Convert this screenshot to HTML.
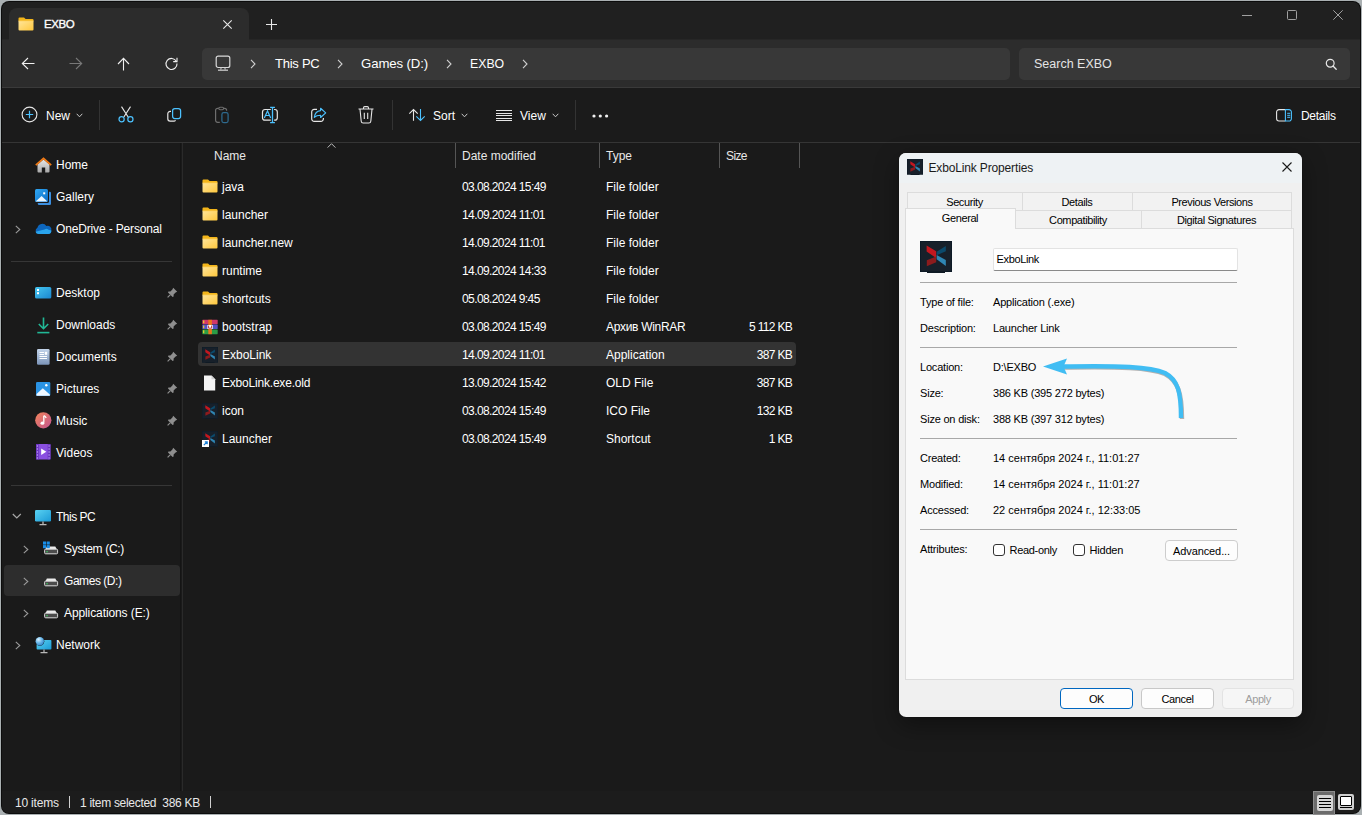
<!DOCTYPE html>
<html><head><meta charset="utf-8">
<style>
*{box-sizing:border-box;margin:0;padding:0}
html,body{width:1362px;height:815px;overflow:hidden;background:#aab0b2}
body{position:relative;font-family:"Liberation Sans",sans-serif;color:#fff}
.a{position:absolute;overflow:visible}
.t{position:absolute;white-space:pre;font-size:12px;line-height:16px;color:#fff}
</style></head><body>
<div class="a" style="left:1px;top:1px;width:1360px;height:813px;background:#0c0c0c;border-radius:8px"></div>
<div class="a" style="left:2px;top:2px;width:1358px;height:811px;background:#202020;border-radius:7px;overflow:hidden"></div>
<div class="a" style="left:9px;top:8px;width:240px;height:32px;background:#2c2c2c;border-radius:8px 8px 0 0"></div>
<div class="a" style="left:2px;top:40px;width:1358px;height:47px;background:#2c2c2c"></div>
<div class="a" style="left:2px;top:39px;width:1358px;height:1px;background:#262626"></div>
<div class="a" style="left:9px;top:39px;width:240px;height:1px;background:#2c2c2c"></div>
<div class="a" style="left:2px;top:87px;width:1358px;height:1px;background:#3a3a3a"></div>
<div class="a" style="left:2px;top:88px;width:1358px;height:54px;background:#1b1b1b"></div>
<div class="a" style="left:2px;top:142px;width:1358px;height:1px;background:#353535"></div>
<div class="a" style="left:2px;top:143px;width:1358px;height:648px;background:#1a1a1a"></div>
<div class="a" style="left:180px;top:143px;width:1px;height:648px;background:#141414"></div>
<div class="a" style="left:182px;top:143px;width:1px;height:648px;background:#2a2a2a"></div>
<div class="a" style="left:2px;top:791px;width:1358px;height:22px;background:#1c1c1c;border-radius:0 0 7px 7px"></div>
<svg class="a" style="left:18px;top:16.5px" width="16" height="14" viewBox="0 0 16 14">
<defs><linearGradient id="fg1" x1="0" y1="0" x2="1" y2="1"><stop offset="0" stop-color="#ffe59a"/><stop offset="1" stop-color="#ffc83d"/></linearGradient></defs>
<path d="M1.5 0.5h4.5l1.6 1.5h6.9a1 1 0 0 1 1 1v1H0.5V1.5a1 1 0 0 1 1-1z" fill="#f3b51a"/>
<path d="M0.5 4h15v8.5a1 1 0 0 1-1 1h-13a1 1 0 0 1-1-1z" fill="url(#fg1)"/>
<path d="M0.5 3.6h15v0.8h-15z" fill="#fbd262"/>
</svg>
<div class="t" style="left:44px;top:16.0px;font-size:11.5px;line-height:16px;color:#fff;letter-spacing:-0.4px;-webkit-text-stroke:0.35px #fff">EXBO</div>
<svg class="a" style="left:223px;top:19.5px" width="9" height="9" viewBox="0 0 9 9"><path d="M0.3 0.3L8.7 8.7M8.7 0.3L0.3 8.7" stroke="#e8e8e8" stroke-width="1.1"/></svg>
<svg class="a" style="left:266px;top:19px" width="11" height="11" viewBox="0 0 11 11"><path d="M5.5 0V11M0 5.5H11" stroke="#e8e8e8" stroke-width="1.1"/></svg>
<svg class="a" style="left:1242px;top:15px" width="10" height="1" viewBox="0 0 10 1"><path d="M0 0.5H10" stroke="#a0a0a0" stroke-width="1"/></svg>
<svg class="a" style="left:1287px;top:10px" width="10" height="10" viewBox="0 0 10 10"><rect x="0.5" y="0.5" width="9" height="9" rx="1" fill="none" stroke="#a0a0a0" stroke-width="1"/></svg>
<svg class="a" style="left:1333px;top:10px" width="10" height="10" viewBox="0 0 10 10"><path d="M0.3 0.3L9.7 9.7M9.7 0.3L0.3 9.7" stroke="#a0a0a0" stroke-width="1"/></svg>
<svg class="a" style="left:21px;top:57px" width="14" height="13" viewBox="0 0 14 13"><path d="M13.5 6.5H1.5M7 1L1.3 6.5L7 12" fill="none" stroke="#f0f0f0" stroke-width="1.1"/></svg>
<svg class="a" style="left:69px;top:57px" width="14" height="13" viewBox="0 0 14 13"><path d="M0.5 6.5H12.5M7 1L12.7 6.5L7 12" fill="none" stroke="#787878" stroke-width="1.1"/></svg>
<svg class="a" style="left:117px;top:57px" width="13" height="14" viewBox="0 0 13 14"><path d="M6.5 13.5V1.5M1 7L6.5 1.3L12 7" fill="none" stroke="#f0f0f0" stroke-width="1.1"/></svg>
<svg class="a" style="left:165px;top:57px" width="13" height="13" viewBox="0 0 13 13"><path d="M11.3 4.2A5.5 5.5 0 1 0 12 6.5" fill="none" stroke="#f0f0f0" stroke-width="1.1"/><path d="M12 0.8V4.6H8.2" fill="none" stroke="#f0f0f0" stroke-width="1.1"/></svg>
<div class="a" style="left:202px;top:48px;width:808px;height:32px;background:#383838;border-radius:5px"></div>
<svg class="a" style="left:215px;top:55px" width="16" height="17" viewBox="0 0 16 17"><rect x="1.2" y="1.2" width="13.6" height="11.3" rx="2" fill="none" stroke="#d8d8d8" stroke-width="1.2"/><path d="M6.2 12.6L5.7 14.6M9.8 12.6L10.3 14.6" stroke="#c8c8c8" stroke-width="1.1"/><path d="M3 15.2H13" stroke="#c8c8c8" stroke-width="1.3"/></svg>
<svg class="a" style="left:250px;top:59px" width="6" height="10" viewBox="0 0 6 10"><path d="M1 0.8L5 5L1 9.2" fill="none" stroke="#d0d0d0" stroke-width="1.1"/></svg>
<div class="t" style="left:275px;top:56.3px;font-size:13px;line-height:16px;color:#fff;letter-spacing:-0.25px">This PC</div>
<svg class="a" style="left:337px;top:59px" width="6" height="10" viewBox="0 0 6 10"><path d="M1 0.8L5 5L1 9.2" fill="none" stroke="#d0d0d0" stroke-width="1.1"/></svg>
<div class="t" style="left:361px;top:56.3px;font-size:13.2px;line-height:16px;color:#fff;letter-spacing:-0.1px">Games (D:)</div>
<svg class="a" style="left:446px;top:59px" width="6" height="10" viewBox="0 0 6 10"><path d="M1 0.8L5 5L1 9.2" fill="none" stroke="#d0d0d0" stroke-width="1.1"/></svg>
<div class="t" style="left:470px;top:56.3px;font-size:12.3px;line-height:16px;color:#fff;">EXBO</div>
<svg class="a" style="left:522px;top:59px" width="6" height="10" viewBox="0 0 6 10"><path d="M1 0.8L5 5L1 9.2" fill="none" stroke="#d0d0d0" stroke-width="1.1"/></svg>
<div class="a" style="left:1019px;top:48px;width:331px;height:32px;background:#383838;border-radius:5px"></div>
<div class="t" style="left:1034px;top:56.0px;font-size:12.5px;line-height:16px;color:#e4e4e4;">Search EXBO</div>
<svg class="a" style="left:1324px;top:57px" width="13" height="13" viewBox="0 0 13 13"><circle cx="6.2" cy="6.2" r="3.9" fill="none" stroke="#e8e8e8" stroke-width="1.2"/><path d="M9 9L12.2 12.2" stroke="#e8e8e8" stroke-width="1.3" stroke-linecap="round"/></svg>
<svg class="a" style="left:21px;top:106px" width="17" height="17" viewBox="0 0 17 17"><circle cx="8.5" cy="8.5" r="7.4" fill="none" stroke="#e6e6e6" stroke-width="1.1"/><path d="M8.5 4.8V12.2M4.8 8.5H12.2" stroke="#4cc2ff" stroke-width="1.2"/></svg>
<div class="t" style="left:46px;top:107.5px;font-size:12px;line-height:16px;color:#fff;">New</div>
<svg class="a" style="left:75.5px;top:113.0px" width="7" height="5" viewBox="0 0 7 5"><path d="M0.7 0.8L3.5 3.8L6.3 0.8" fill="none" stroke="#c8c8c8" stroke-width="1"/></svg>
<div class="a" style="left:99px;top:100px;width:1px;height:30px;background:#333"></div>
<svg class="a" style="left:118px;top:106px" width="16" height="17" viewBox="0 0 16 17"><path d="M3.5 0.6L10.3 11.2M12.5 0.6L5.7 11.2" stroke="#e6e6e6" stroke-width="1.1" fill="none"/><circle cx="3.6" cy="13.3" r="2.6" fill="none" stroke="#4cc2ff" stroke-width="1.2"/><circle cx="12.4" cy="13.3" r="2.6" fill="none" stroke="#4cc2ff" stroke-width="1.2"/></svg>
<svg class="a" style="left:166px;top:107px" width="16" height="16" viewBox="0 0 16 16"><rect x="6.6" y="1.6" width="8" height="9.9" rx="2.2" fill="none" stroke="#4cc2ff" stroke-width="1.25"/><path d="M5 4.4H4.1A2.3 2.3 0 0 0 1.8 6.7V11.8A2.3 2.3 0 0 0 4.1 14.1H7.9A1.8 1.8 0 0 0 9.5 13.2" fill="none" stroke="#e6e6e6" stroke-width="1.2"/></svg>
<svg class="a" style="left:214px;top:106px" width="16" height="18" viewBox="0 0 16 18"><path d="M5.8 16.3H3.6A2 2 0 0 1 1.6 14.3V4.3A2 2 0 0 1 3.6 2.3H4.7M9.7 2.3H10.6A2 2 0 0 1 12.6 4.3V4.7" fill="none" stroke="#6e6e6e" stroke-width="1.2"/><rect x="4.8" y="1.2" width="4.8" height="2.5" rx="1.25" fill="none" stroke="#6e6e6e" stroke-width="1.1"/><rect x="7.9" y="6.6" width="6.2" height="10" rx="1.8" fill="none" stroke="#2e6a8e" stroke-width="1.25"/></svg>
<svg class="a" style="left:261px;top:106px" width="18" height="18" viewBox="0 0 18 18"><path d="M9.8 3.5H4A2.5 2.5 0 0 0 1.5 6V11.7A2.5 2.5 0 0 0 4 14.2H9.8M13.1 3.5H13.8A2.5 2.5 0 0 1 16.3 6V11.7A2.5 2.5 0 0 1 13.8 14.2H13.1" fill="none" stroke="#e6e6e6" stroke-width="1.2"/><path d="M11.5 1.3V16.7M9.1 1.3H13.9M9.1 16.7H13.9" stroke="#4cc2ff" stroke-width="1.3" fill="none"/><path d="M3.3 11.9L6.5 4.9L9.7 11.9M4.5 9.5H8.5" stroke="#4cc2ff" stroke-width="1.2" fill="none"/></svg>
<svg class="a" style="left:310px;top:107px" width="17" height="16" viewBox="0 0 17 16"><path d="M7 2.4H4.2A2.5 2.5 0 0 0 1.7 4.9V11.8A2.5 2.5 0 0 0 4.2 14.3H10.9A2.5 2.5 0 0 0 13.4 11.8V10.9" fill="none" stroke="#e6e6e6" stroke-width="1.2"/><path d="M10.6 1.3L15.7 5.9L10.6 10.5V8.2C7.6 8.2 5.6 9 4.3 10.3C4.8 6.5 7.2 3.9 10.6 3.6Z" fill="none" stroke="#4cc2ff" stroke-width="1.15" stroke-linejoin="round"/></svg>
<svg class="a" style="left:358px;top:106px" width="16" height="18" viewBox="0 0 16 18"><path d="M0.5 3H15.5M5.5 3V1.8A1.2 1.2 0 0 1 6.7 0.6H9.3A1.2 1.2 0 0 1 10.5 1.8V3M2 3.3L3.2 15.2A2 2 0 0 0 5.2 17H10.8A2 2 0 0 0 12.8 15.2L14 3.3M6.3 6.8V13M9.7 6.8V13" fill="none" stroke="#e6e6e6" stroke-width="1.1"/></svg>
<div class="a" style="left:392px;top:100px;width:1px;height:30px;background:#333"></div>
<svg class="a" style="left:408px;top:109px" width="18" height="13" viewBox="0 0 18 13"><path d="M5.5 11.7V0.8M1.3 4.6L5.5 0.6L9.7 4.6" fill="none" stroke="#e6e6e6" stroke-width="1.1"/><path d="M12.5 0.1V11M8.3 7.4L12.5 11.4L16.7 7.4" fill="none" stroke="#4cc2ff" stroke-width="1.1"/></svg>
<div class="t" style="left:433px;top:107.5px;font-size:12px;line-height:16px;color:#fff;">Sort</div>
<svg class="a" style="left:461px;top:113.0px" width="7" height="5" viewBox="0 0 7 5"><path d="M0.7 0.8L3.5 3.8L6.3 0.8" fill="none" stroke="#c8c8c8" stroke-width="1"/></svg>
<svg class="a" style="left:496px;top:110px" width="16" height="11" viewBox="0 0 16 11"><path d="M0 0.5H16M0 3.5H16M0 5.5H16M0 8.5H16M0 10.5H16" stroke="#e6e6e6" stroke-width="1" shape-rendering="crispEdges"/></svg>
<div class="t" style="left:520px;top:107.5px;font-size:12px;line-height:16px;color:#fff;">View</div>
<svg class="a" style="left:551.5px;top:113.0px" width="7" height="5" viewBox="0 0 7 5"><path d="M0.7 0.8L3.5 3.8L6.3 0.8" fill="none" stroke="#c8c8c8" stroke-width="1"/></svg>
<div class="a" style="left:575px;top:100px;width:1px;height:30px;background:#333"></div>
<svg class="a" style="left:592px;top:114px" width="17" height="4" viewBox="0 0 17 4"><circle cx="2" cy="2" r="1.6" fill="#f0f0f0"/><circle cx="8.3" cy="2" r="1.6" fill="#f0f0f0"/><circle cx="14.6" cy="2" r="1.6" fill="#f0f0f0"/></svg>
<svg class="a" style="left:1276px;top:109px" width="16" height="13" viewBox="0 0 16 13"><path d="M9.4 0.6H3A2.4 2.4 0 0 0 0.6 3V9.6A2.4 2.4 0 0 0 3 12H9.4" fill="none" stroke="#e6e6e6" stroke-width="1.1"/><path d="M9.4 0.6H13A2.4 2.4 0 0 1 15.4 3V9.6A2.4 2.4 0 0 1 13 12H9.4Z" fill="none" stroke="#4cc2ff" stroke-width="1.1"/><path d="M11.2 4.3H14.2M11.2 6.3H14.2M11.2 8.3H14.2" stroke="#4cc2ff" stroke-width="1"/></svg>
<div class="t" style="left:1301px;top:107.5px;font-size:12px;line-height:16px;color:#fff;letter-spacing:-0.3px">Details</div>
<svg class="a" style="left:35px;top:157px" width="17" height="16" viewBox="0 0 17 16"><defs><linearGradient id="hg" x1="0" y1="0" x2="0" y2="1"><stop offset="0" stop-color="#e8e8e8"/><stop offset="1" stop-color="#a8a8a8"/></linearGradient></defs><path d="M2.5 7.5L8.5 2.5L14.5 7.5V14.5A1 1 0 0 1 13.5 15.5H10.2V10.5H6.8V15.5H3.5A1 1 0 0 1 2.5 14.5Z" fill="url(#hg)"/><path d="M0.8 8.2L8.5 1.3L16.2 8.2" fill="none" stroke="#f07a16" stroke-width="1.8" stroke-linejoin="round"/></svg>
<div class="t" style="left:56px;top:156.5px;font-size:12px;line-height:16px;color:#fff;">Home</div>
<svg class="a" style="left:35px;top:189px" width="17" height="17" viewBox="0 0 17 17"><defs><linearGradient id="gg" x1="0" y1="0" x2="1" y2="1"><stop offset="0" stop-color="#30a8f4"/><stop offset="1" stop-color="#0b6cc6"/></linearGradient></defs><rect x="2.8" y="2.8" width="13.2" height="13.2" rx="1.3" fill="#3b8fe0"/><rect x="0" y="0" width="14" height="14" rx="1.6" fill="#1a1a1a"/><rect x="0" y="0" width="13" height="13" rx="1.5" fill="url(#gg)"/><path d="M0.6 12.4L6.6 7L12.4 12.4Z" fill="#eaf6ff"/><rect x="8.2" y="3.3" width="2" height="2" fill="#fff"/></svg>
<div class="t" style="left:56px;top:188.5px;font-size:12px;line-height:16px;color:#fff;">Gallery</div>
<svg class="a" style="left:15px;top:225.0px" width="6" height="9" viewBox="0 0 6 9"><path d="M0.8 0.8L4.8 4.5L0.8 8.2" fill="none" stroke="#9a9a9a" stroke-width="1.1"/></svg>
<svg class="a" style="left:35px;top:223px" width="17" height="12" viewBox="0 0 17 12"><path d="M3.6 11A3.3 3.3 0 0 1 2.4 4.8A5 5 0 0 1 11.4 3A3.8 3.8 0 0 1 16.3 7.6A3.2 3.2 0 0 1 13.2 11Z" fill="#0d66bd"/><path d="M3.6 11H13.2A3.2 3.2 0 0 0 16.3 7.6L13.5 6.8A3 3 0 0 0 9.5 6.5L0.5 8.8A3.2 3.2 0 0 0 3.6 11Z" fill="#2aa4ec"/></svg>
<div class="t" style="left:56px;top:220.5px;font-size:12px;line-height:16px;color:#fff;letter-spacing:-0.15px">OneDrive - Personal</div>
<div class="a" style="left:11px;top:261px;width:161px;height:1px;background:#363636"></div>
<svg class="a" style="left:35px;top:287px" width="17" height="12" viewBox="0 0 17 12"><defs><linearGradient id="dg" x1="0" y1="0" x2="1" y2="1"><stop offset="0" stop-color="#45c6f0"/><stop offset="1" stop-color="#1a86d0"/></linearGradient></defs><rect x="0" y="0" width="16.3" height="11.6" rx="1.6" fill="url(#dg)"/><rect x="2" y="2" width="2" height="2" fill="#fff"/><rect x="2" y="5.2" width="2" height="2" fill="#fff"/></svg>
<div class="t" style="left:56px;top:284.5px;font-size:12px;line-height:16px;color:#fff;">Desktop</div>
<svg class="a" style="left:167px;top:287.0px" width="11" height="11" viewBox="0 0 11 11"><path d="M6.2 0.8L10.2 4.8L8.6 5.6L6.6 7.6L6.6 9.6L5.6 10L1 5.4L1.4 4.4L3.4 4.4L5.4 2.4Z" fill="#8f8f8f"/><path d="M3.2 7.8L0.6 10.4" stroke="#8f8f8f" stroke-width="1.2"/></svg>
<svg class="a" style="left:37px;top:317px" width="13" height="17" viewBox="0 0 13 17"><path d="M6.5 0.5V11.5M1.8 7L6.5 11.7L11.2 7" fill="none" stroke="#21b896" stroke-width="1.6"/><path d="M0.3 15.6H12.4" stroke="#21b896" stroke-width="1.6"/></svg>
<div class="t" style="left:56px;top:316.5px;font-size:12px;line-height:16px;color:#fff;">Downloads</div>
<svg class="a" style="left:167px;top:319.0px" width="11" height="11" viewBox="0 0 11 11"><path d="M6.2 0.8L10.2 4.8L8.6 5.6L6.6 7.6L6.6 9.6L5.6 10L1 5.4L1.4 4.4L3.4 4.4L5.4 2.4Z" fill="#8f8f8f"/><path d="M3.2 7.8L0.6 10.4" stroke="#8f8f8f" stroke-width="1.2"/></svg>
<svg class="a" style="left:37px;top:349px" width="13" height="16" viewBox="0 0 13 16"><defs><linearGradient id="docg" x1="0" y1="0" x2="0" y2="1"><stop offset="0" stop-color="#c3d4ea"/><stop offset="1" stop-color="#7b94b8"/></linearGradient></defs><rect x="0" y="0" width="12.6" height="15.8" rx="1.3" fill="url(#docg)"/><path d="M2.5 3.5H7M2.5 5.5H7M2.5 7.5H10M2.5 9.5H10" stroke="#fff" stroke-width="1"/><rect x="7.8" y="2.8" width="2.4" height="3" fill="#fff"/></svg>
<div class="t" style="left:56px;top:348.5px;font-size:12px;line-height:16px;color:#fff;">Documents</div>
<svg class="a" style="left:167px;top:351.0px" width="11" height="11" viewBox="0 0 11 11"><path d="M6.2 0.8L10.2 4.8L8.6 5.6L6.6 7.6L6.6 9.6L5.6 10L1 5.4L1.4 4.4L3.4 4.4L5.4 2.4Z" fill="#8f8f8f"/><path d="M3.2 7.8L0.6 10.4" stroke="#8f8f8f" stroke-width="1.2"/></svg>
<svg class="a" style="left:36px;top:382px" width="15" height="15" viewBox="0 0 15 15"><rect x="0" y="0" width="14.3" height="14" rx="1.3" fill="#2a93e4"/><path d="M0.5 12L6.8 6.3L13.8 12.5V13.7H0.5Z" fill="#eef6ff"/><circle cx="10.3" cy="3.3" r="1.2" fill="#fff"/></svg>
<div class="t" style="left:56px;top:380.5px;font-size:12px;line-height:16px;color:#fff;">Pictures</div>
<svg class="a" style="left:167px;top:383.0px" width="11" height="11" viewBox="0 0 11 11"><path d="M6.2 0.8L10.2 4.8L8.6 5.6L6.6 7.6L6.6 9.6L5.6 10L1 5.4L1.4 4.4L3.4 4.4L5.4 2.4Z" fill="#8f8f8f"/><path d="M3.2 7.8L0.6 10.4" stroke="#8f8f8f" stroke-width="1.2"/></svg>
<svg class="a" style="left:35px;top:412px" width="17" height="17" viewBox="0 0 17 17"><defs><linearGradient id="mg" x1="0" y1="0" x2="1" y2="1"><stop offset="0" stop-color="#f2845a"/><stop offset="1" stop-color="#c2558f"/></linearGradient></defs><circle cx="8.3" cy="8.3" r="8.1" fill="url(#mg)"/><path d="M8.8 3.8V10.8" stroke="#fff" stroke-width="1.3"/><path d="M8.8 3.6Q10.5 4.2 11.2 6" stroke="#fff" stroke-width="1.2" fill="none"/><ellipse cx="7.4" cy="11.2" rx="1.9" ry="1.6" fill="#fff"/></svg>
<div class="t" style="left:56px;top:412.5px;font-size:12px;line-height:16px;color:#fff;">Music</div>
<svg class="a" style="left:167px;top:415.0px" width="11" height="11" viewBox="0 0 11 11"><path d="M6.2 0.8L10.2 4.8L8.6 5.6L6.6 7.6L6.6 9.6L5.6 10L1 5.4L1.4 4.4L3.4 4.4L5.4 2.4Z" fill="#8f8f8f"/><path d="M3.2 7.8L0.6 10.4" stroke="#8f8f8f" stroke-width="1.2"/></svg>
<svg class="a" style="left:36px;top:444px" width="15" height="16" viewBox="0 0 15 16"><rect x="0" y="0" width="14.5" height="15.5" rx="1.3" fill="#8a4fe0"/><path d="M0 0H2.8V15.5H0ZM11.7 0H14.5V15.5H11.7Z" fill="#6a34c0"/><path d="M0.8 2H2M0.8 5H2M0.8 8H2M0.8 11H2M0.8 14H2M12.5 2H13.7M12.5 5H13.7M12.5 8H13.7M12.5 11H13.7M12.5 14H13.7" stroke="#d8c0ff" stroke-width="1.1"/><path d="M5.2 4.5L10.3 7.8L5.2 11Z" fill="#fff"/></svg>
<div class="t" style="left:56px;top:444.5px;font-size:12px;line-height:16px;color:#fff;">Videos</div>
<svg class="a" style="left:167px;top:447.0px" width="11" height="11" viewBox="0 0 11 11"><path d="M6.2 0.8L10.2 4.8L8.6 5.6L6.6 7.6L6.6 9.6L5.6 10L1 5.4L1.4 4.4L3.4 4.4L5.4 2.4Z" fill="#8f8f8f"/><path d="M3.2 7.8L0.6 10.4" stroke="#8f8f8f" stroke-width="1.2"/></svg>
<div class="a" style="left:11px;top:485px;width:161px;height:1px;background:#363636"></div>
<svg class="a" style="left:12px;top:513px" width="10" height="7" viewBox="0 0 10 7"><path d="M0.8 1L4.8 5L8.8 1" fill="none" stroke="#a8a8a8" stroke-width="1.2"/></svg>
<svg class="a" style="left:35px;top:510px" width="16" height="16" viewBox="0 0 16 16"><defs><linearGradient id="pcg" x1="0" y1="0" x2="1" y2="1"><stop offset="0" stop-color="#5ad2f2"/><stop offset="1" stop-color="#1b9ad6"/></linearGradient></defs><rect x="0" y="0" width="16" height="11.5" rx="1.2" fill="url(#pcg)"/><path d="M8 11.5V14M4.5 14.6H11.5" stroke="#b8b8b8" stroke-width="1.3"/></svg>
<div class="t" style="left:56px;top:508.5px;font-size:12px;line-height:16px;color:#fff;letter-spacing:-0.5px">This PC</div>
<svg class="a" style="left:23px;top:545.0px" width="6" height="9" viewBox="0 0 6 9"><path d="M0.8 0.8L4.8 4.5L0.8 8.2" fill="none" stroke="#9a9a9a" stroke-width="1.1"/></svg>
<svg class="a" style="left:43px;top:540.5px" width="16" height="16" viewBox="0 0 16 16"><path d="M2.3 8.4L3.9 5.6H12.3L13.9 8.4Z" fill="#ececec"/><rect x="1.6" y="8.2" width="13" height="4.6" rx="1" fill="#4c4c4c" stroke="#dcdcdc" stroke-width="1"/><rect x="3.4" y="10" width="1.3" height="1.3" fill="#3ad060"/><rect x="0" y="0.5" width="3.1" height="3.1" fill="#1a8ee8"/><rect x="3.7" y="0.5" width="3.1" height="3.1" fill="#1a8ee8"/><rect x="0" y="4.1" width="3.1" height="3.1" fill="#1a8ee8"/><rect x="3.7" y="4.1" width="3.1" height="3.1" fill="#1a8ee8"/></svg>
<div class="t" style="left:64px;top:540.5px;font-size:12px;line-height:16px;color:#fff;letter-spacing:-0.3px">System (C:)</div>
<div class="a" style="left:4px;top:565px;width:176px;height:31px;background:#2d2d2d;border-radius:4px"></div>
<svg class="a" style="left:23px;top:577.0px" width="6" height="9" viewBox="0 0 6 9"><path d="M0.8 0.8L4.8 4.5L0.8 8.2" fill="none" stroke="#9a9a9a" stroke-width="1.1"/></svg>
<svg class="a" style="left:43px;top:572.5px" width="16" height="16" viewBox="0 0 16 16"><path d="M2.3 8.4L3.9 5.6H12.3L13.9 8.4Z" fill="#ececec"/><rect x="1.6" y="8.2" width="13" height="4.6" rx="1" fill="#4c4c4c" stroke="#dcdcdc" stroke-width="1"/><rect x="3.4" y="10" width="1.3" height="1.3" fill="#3ad060"/></svg>
<div class="t" style="left:64px;top:572.5px;font-size:12px;line-height:16px;color:#fff;letter-spacing:-0.45px">Games (D:)</div>
<svg class="a" style="left:23px;top:609.0px" width="6" height="9" viewBox="0 0 6 9"><path d="M0.8 0.8L4.8 4.5L0.8 8.2" fill="none" stroke="#9a9a9a" stroke-width="1.1"/></svg>
<svg class="a" style="left:43px;top:604.5px" width="16" height="16" viewBox="0 0 16 16"><path d="M2.3 8.4L3.9 5.6H12.3L13.9 8.4Z" fill="#ececec"/><rect x="1.6" y="8.2" width="13" height="4.6" rx="1" fill="#4c4c4c" stroke="#dcdcdc" stroke-width="1"/><rect x="3.4" y="10" width="1.3" height="1.3" fill="#3ad060"/></svg>
<div class="t" style="left:64px;top:604.5px;font-size:12px;line-height:16px;color:#fff;letter-spacing:-0.1px">Applications (E:)</div>
<svg class="a" style="left:15px;top:641.0px" width="6" height="9" viewBox="0 0 6 9"><path d="M0.8 0.8L4.8 4.5L0.8 8.2" fill="none" stroke="#9a9a9a" stroke-width="1.1"/></svg>
<svg class="a" style="left:35px;top:636px" width="17" height="18" viewBox="0 0 17 18"><defs><linearGradient id="ng" x1="0" y1="0" x2="1" y2="1"><stop offset="0" stop-color="#5ad2f2"/><stop offset="1" stop-color="#1b9ad6"/></linearGradient><radialGradient id="glb" cx="0.35" cy="0.3" r="0.8"><stop offset="0" stop-color="#d8f0ff"/><stop offset="0.5" stop-color="#6ab8ea"/><stop offset="1" stop-color="#2a7cc8"/></radialGradient></defs><rect x="1.6" y="4" width="14.8" height="9.6" rx="0.8" fill="url(#ng)"/><path d="M9 13.6V16M5.5 16.6H12.5" stroke="#b8b8b8" stroke-width="1.2"/><circle cx="4.8" cy="5.2" r="4.5" fill="#1a1a1a"/><circle cx="4.8" cy="5.2" r="4.2" fill="url(#glb)"/></svg>
<div class="t" style="left:56px;top:636.5px;font-size:12px;line-height:16px;color:#fff;">Network</div>
<div class="t" style="left:214px;top:147.5px;font-size:12px;line-height:16px;color:#e8e8e8;">Name</div>
<svg class="a" style="left:327px;top:143px" width="9" height="5" viewBox="0 0 9 5"><path d="M0.6 4.6L4.5 0.7L8.4 4.6" fill="none" stroke="#bdbdbd" stroke-width="1"/></svg>
<div class="a" style="left:455px;top:143px;width:1px;height:25px;background:#555555"></div>
<div class="a" style="left:599px;top:143px;width:1px;height:25px;background:#555555"></div>
<div class="a" style="left:719px;top:143px;width:1px;height:25px;background:#555555"></div>
<div class="a" style="left:799px;top:143px;width:1px;height:25px;background:#555555"></div>
<div class="t" style="left:462px;top:147.5px;font-size:12px;line-height:16px;color:#e8e8e8;">Date modified</div>
<div class="t" style="left:606px;top:147.5px;font-size:12px;line-height:16px;color:#e8e8e8;">Type</div>
<div class="t" style="left:726px;top:147.5px;font-size:12px;line-height:16px;color:#e8e8e8;letter-spacing:-0.6px">Size</div>
<div class="a" style="left:198px;top:342px;width:598px;height:24px;background:#333333;border-radius:4px"></div>
<svg class="a" style="left:202px;top:179.0px" width="16" height="14" viewBox="0 0 16 14">
<defs><linearGradient id="fg2" x1="0" y1="0" x2="1" y2="1"><stop offset="0" stop-color="#ffe59a"/><stop offset="1" stop-color="#ffc83d"/></linearGradient></defs>
<path d="M1.5 0.5h4.5l1.6 1.5h6.9a1 1 0 0 1 1 1v1H0.5V1.5a1 1 0 0 1 1-1z" fill="#f3b51a"/>
<path d="M0.5 4h15v8.5a1 1 0 0 1-1 1h-13a1 1 0 0 1-1-1z" fill="url(#fg2)"/>
<path d="M0.5 3.6h15v0.8h-15z" fill="#fbd262"/>
</svg>
<div class="t" style="left:222px;top:178.5px;font-size:12px;line-height:16px;color:#fff;">java</div>
<div class="t" style="left:462px;top:178.5px;font-size:12px;line-height:16px;color:#fff;letter-spacing:-0.6px">03.08.2024 15:49</div>
<div class="t" style="left:606px;top:178.5px;font-size:12px;line-height:16px;color:#fff;">File folder</div>
<svg class="a" style="left:202px;top:207.0px" width="16" height="14" viewBox="0 0 16 14">
<defs><linearGradient id="fg3" x1="0" y1="0" x2="1" y2="1"><stop offset="0" stop-color="#ffe59a"/><stop offset="1" stop-color="#ffc83d"/></linearGradient></defs>
<path d="M1.5 0.5h4.5l1.6 1.5h6.9a1 1 0 0 1 1 1v1H0.5V1.5a1 1 0 0 1 1-1z" fill="#f3b51a"/>
<path d="M0.5 4h15v8.5a1 1 0 0 1-1 1h-13a1 1 0 0 1-1-1z" fill="url(#fg3)"/>
<path d="M0.5 3.6h15v0.8h-15z" fill="#fbd262"/>
</svg>
<div class="t" style="left:222px;top:206.5px;font-size:12px;line-height:16px;color:#fff;">launcher</div>
<div class="t" style="left:462px;top:206.5px;font-size:12px;line-height:16px;color:#fff;letter-spacing:-0.6px">14.09.2024 11:01</div>
<div class="t" style="left:606px;top:206.5px;font-size:12px;line-height:16px;color:#fff;">File folder</div>
<svg class="a" style="left:202px;top:235.0px" width="16" height="14" viewBox="0 0 16 14">
<defs><linearGradient id="fg4" x1="0" y1="0" x2="1" y2="1"><stop offset="0" stop-color="#ffe59a"/><stop offset="1" stop-color="#ffc83d"/></linearGradient></defs>
<path d="M1.5 0.5h4.5l1.6 1.5h6.9a1 1 0 0 1 1 1v1H0.5V1.5a1 1 0 0 1 1-1z" fill="#f3b51a"/>
<path d="M0.5 4h15v8.5a1 1 0 0 1-1 1h-13a1 1 0 0 1-1-1z" fill="url(#fg4)"/>
<path d="M0.5 3.6h15v0.8h-15z" fill="#fbd262"/>
</svg>
<div class="t" style="left:222px;top:234.5px;font-size:12px;line-height:16px;color:#fff;">launcher.new</div>
<div class="t" style="left:462px;top:234.5px;font-size:12px;line-height:16px;color:#fff;letter-spacing:-0.6px">14.09.2024 11:01</div>
<div class="t" style="left:606px;top:234.5px;font-size:12px;line-height:16px;color:#fff;">File folder</div>
<svg class="a" style="left:202px;top:263.0px" width="16" height="14" viewBox="0 0 16 14">
<defs><linearGradient id="fg5" x1="0" y1="0" x2="1" y2="1"><stop offset="0" stop-color="#ffe59a"/><stop offset="1" stop-color="#ffc83d"/></linearGradient></defs>
<path d="M1.5 0.5h4.5l1.6 1.5h6.9a1 1 0 0 1 1 1v1H0.5V1.5a1 1 0 0 1 1-1z" fill="#f3b51a"/>
<path d="M0.5 4h15v8.5a1 1 0 0 1-1 1h-13a1 1 0 0 1-1-1z" fill="url(#fg5)"/>
<path d="M0.5 3.6h15v0.8h-15z" fill="#fbd262"/>
</svg>
<div class="t" style="left:222px;top:262.5px;font-size:12px;line-height:16px;color:#fff;">runtime</div>
<div class="t" style="left:462px;top:262.5px;font-size:12px;line-height:16px;color:#fff;letter-spacing:-0.6px">14.09.2024 14:33</div>
<div class="t" style="left:606px;top:262.5px;font-size:12px;line-height:16px;color:#fff;">File folder</div>
<svg class="a" style="left:202px;top:291.0px" width="16" height="14" viewBox="0 0 16 14">
<defs><linearGradient id="fg6" x1="0" y1="0" x2="1" y2="1"><stop offset="0" stop-color="#ffe59a"/><stop offset="1" stop-color="#ffc83d"/></linearGradient></defs>
<path d="M1.5 0.5h4.5l1.6 1.5h6.9a1 1 0 0 1 1 1v1H0.5V1.5a1 1 0 0 1 1-1z" fill="#f3b51a"/>
<path d="M0.5 4h15v8.5a1 1 0 0 1-1 1h-13a1 1 0 0 1-1-1z" fill="url(#fg6)"/>
<path d="M0.5 3.6h15v0.8h-15z" fill="#fbd262"/>
</svg>
<div class="t" style="left:222px;top:290.5px;font-size:12px;line-height:16px;color:#fff;">shortcuts</div>
<div class="t" style="left:462px;top:290.5px;font-size:12px;line-height:16px;color:#fff;letter-spacing:-0.6px">05.08.2024 9:45</div>
<div class="t" style="left:606px;top:290.5px;font-size:12px;line-height:16px;color:#fff;">File folder</div>
<svg class="a" style="left:202px;top:318.5px" width="16" height="16" viewBox="0 0 16 16"><rect x="0.3" y="0.8" width="15.4" height="4.4" rx="0.6" fill="#d0386a"/><rect x="0.3" y="5.6" width="15.4" height="4.4" rx="0.6" fill="#5552c4"/><rect x="0.3" y="10.4" width="15.4" height="4.8" rx="0.6" fill="#2b9c46"/><rect x="6.3" y="0.8" width="3.6" height="14.4" fill="#e9761c"/><rect x="5.4" y="6" width="5.4" height="4" rx="0.6" fill="#fff"/><path d="M6.6 6.6V9.2H9.6V6.6" stroke="#b02a2a" stroke-width="0.9" fill="none"/><path d="M1.7 1.6V4.2M1.7 6.4V9.2M1.7 11.2V14.2" stroke="#f2d028" stroke-width="1.2"/></svg>
<div class="t" style="left:222px;top:318.5px;font-size:12px;line-height:16px;color:#fff;">bootstrap</div>
<div class="t" style="left:462px;top:318.5px;font-size:12px;line-height:16px;color:#fff;letter-spacing:-0.6px">03.08.2024 15:49</div>
<div class="t" style="left:606px;top:318.5px;font-size:12px;line-height:16px;color:#fff;letter-spacing:-0.3px">Архив WinRAR</div>
<div class="t" style="right:570px;top:318.5px;font-size:12px;line-height:16px;color:#fff;letter-spacing:-0.7px">5 112 KB</div>
<svg class="a" style="left:202px;top:346.5px" width="16" height="16" viewBox="0 0 32 32"><rect x="0" y="0" width="32" height="31" fill="#17202a"/><rect x="0.5" y="0.5" width="31" height="30" fill="none" stroke="#0d1a26" stroke-width="1"/><rect x="7" y="30" width="18" height="2" fill="#0f1a24"/><path d="M6.6 4.5L16.2 10.3V17L6.6 10.6Z" fill="#c3171f"/><path d="M16.2 15.5L6.8 19.2V25.3L16.2 21.2Z" fill="#8c1b1d"/><path d="M25.8 5L16.7 10.8V14.2L25.8 10.3Z" fill="#0b4a6c"/><path d="M16.7 13.9V18.2L25.8 25V19.1Z" fill="#2f86b4"/></svg>
<div class="t" style="left:222px;top:346.5px;font-size:12px;line-height:16px;color:#fff;">ExboLink</div>
<div class="t" style="left:462px;top:346.5px;font-size:12px;line-height:16px;color:#fff;letter-spacing:-0.6px">14.09.2024 11:01</div>
<div class="t" style="left:606px;top:346.5px;font-size:12px;line-height:16px;color:#fff;">Application</div>
<div class="t" style="right:570px;top:346.5px;font-size:12px;line-height:16px;color:#fff;letter-spacing:-0.7px">387 KB</div>
<svg class="a" style="left:203px;top:374.5px" width="13" height="16" viewBox="0 0 13 16"><path d="M1 0.5H8.5L12.2 4.2V15.5H1Z" fill="#f4f4f4"/><path d="M8.5 0.5V4.2H12.2" fill="#d0d0d0"/></svg>
<div class="t" style="left:222px;top:374.5px;font-size:12px;line-height:16px;color:#fff;letter-spacing:-0.2px">ExboLink.exe.old</div>
<div class="t" style="left:462px;top:374.5px;font-size:12px;line-height:16px;color:#fff;letter-spacing:-0.6px">13.09.2024 15:42</div>
<div class="t" style="left:606px;top:374.5px;font-size:12px;line-height:16px;color:#fff;">OLD File</div>
<div class="t" style="right:570px;top:374.5px;font-size:12px;line-height:16px;color:#fff;letter-spacing:-0.7px">387 KB</div>
<svg class="a" style="left:202px;top:402.5px" width="16" height="16" viewBox="0 0 32 32"><rect x="0" y="0" width="32" height="31" fill="#17202a"/><rect x="0.5" y="0.5" width="31" height="30" fill="none" stroke="#0d1a26" stroke-width="1"/><rect x="7" y="30" width="18" height="2" fill="#0f1a24"/><path d="M6.6 4.5L16.2 10.3V17L6.6 10.6Z" fill="#c3171f"/><path d="M16.2 15.5L6.8 19.2V25.3L16.2 21.2Z" fill="#8c1b1d"/><path d="M25.8 5L16.7 10.8V14.2L25.8 10.3Z" fill="#0b4a6c"/><path d="M16.7 13.9V18.2L25.8 25V19.1Z" fill="#2f86b4"/></svg>
<div class="t" style="left:222px;top:402.5px;font-size:12px;line-height:16px;color:#fff;">icon</div>
<div class="t" style="left:462px;top:402.5px;font-size:12px;line-height:16px;color:#fff;letter-spacing:-0.6px">03.08.2024 15:49</div>
<div class="t" style="left:606px;top:402.5px;font-size:12px;line-height:16px;color:#fff;">ICO File</div>
<div class="t" style="right:570px;top:402.5px;font-size:12px;line-height:16px;color:#fff;letter-spacing:-0.7px">132 KB</div>
<svg class="a" style="left:202px;top:430.5px" width="16" height="16" viewBox="0 0 32 32"><rect x="0" y="0" width="32" height="31" fill="#17202a"/><rect x="0.5" y="0.5" width="31" height="30" fill="none" stroke="#0d1a26" stroke-width="1"/><rect x="7" y="30" width="18" height="2" fill="#0f1a24"/><path d="M6.6 4.5L16.2 10.3V17L6.6 10.6Z" fill="#c3171f"/><path d="M16.2 15.5L6.8 19.2V25.3L16.2 21.2Z" fill="#8c1b1d"/><path d="M25.8 5L16.7 10.8V14.2L25.8 10.3Z" fill="#0b4a6c"/><path d="M16.7 13.9V18.2L25.8 25V19.1Z" fill="#2f86b4"/><rect x="0" y="18" width="14" height="14" fill="#fff"/><path d="M3.6 28.4L10 22M5.6 21.6H10.4V26.4" stroke="#1a7fd6" stroke-width="2.4" fill="none"/></svg>
<div class="t" style="left:222px;top:430.5px;font-size:12px;line-height:16px;color:#fff;">Launcher</div>
<div class="t" style="left:462px;top:430.5px;font-size:12px;line-height:16px;color:#fff;letter-spacing:-0.6px">03.08.2024 15:49</div>
<div class="t" style="left:606px;top:430.5px;font-size:12px;line-height:16px;color:#fff;">Shortcut</div>
<div class="t" style="right:570px;top:430.5px;font-size:12px;line-height:16px;color:#fff;letter-spacing:-0.7px">1 KB</div>
<div class="t" style="left:15px;top:794.5px;font-size:12px;line-height:16px;color:#e8e8e8;letter-spacing:-0.2px">10 items</div>
<div class="a" style="left:69px;top:796px;width:1px;height:12px;background:#d0d0d0"></div>
<div class="t" style="left:80px;top:794.5px;font-size:12px;line-height:16px;color:#e8e8e8;letter-spacing:-0.3px">1 item selected  386 KB</div>
<div class="a" style="left:210px;top:796px;width:1px;height:12px;background:#d0d0d0"></div>
<div class="a" style="left:1313px;top:791px;width:22px;height:24px;background:#6c6c6c;border:1px solid #8c8c8c"></div>
<div class="a" style="left:1317px;top:795px;width:16px;height:16px;background:#d6d6d6;border-radius:2px"></div>
<svg class="a" style="left:1319px;top:797px" width="12" height="12" viewBox="0 0 12 12"><path d="M0 1.5H12M0 4.5H12M0 7.5H12M0 10.5H12" stroke="#000" stroke-width="1"/></svg>
<div class="a" style="left:1338px;top:794px;width:16px;height:16px;background:#cfcfcf;border-radius:2px"></div>
<div class="a" style="left:1340px;top:796px;width:12px;height:10px;background:#fff;border:1px solid #000;border-radius:1px"></div>
<div class="a" style="left:1340px;top:807px;width:12px;height:1px;background:#000"></div>
<div class="a" style="left:899px;top:153px;width:403px;height:564px;border-radius:7px;background:#f0f0f0;box-shadow:0 0 1px 0 rgba(0,0,0,0.8), 0 8px 24px rgba(0,0,0,0.4)"></div>
<div class="a" style="left:899px;top:153px;width:403px;height:30px;border-radius:7px 7px 0 0;background:#eef2f4"></div>
<svg class="a" style="left:907px;top:159px" width="16" height="16" viewBox="0 0 32 32"><rect x="0" y="0" width="32" height="31" fill="#17202a"/><rect x="0.5" y="0.5" width="31" height="30" fill="none" stroke="#0d1a26" stroke-width="1"/><rect x="7" y="30" width="18" height="2" fill="#0f1a24"/><path d="M6.6 4.5L16.2 10.3V17L6.6 10.6Z" fill="#c3171f"/><path d="M16.2 15.5L6.8 19.2V25.3L16.2 21.2Z" fill="#8c1b1d"/><path d="M25.8 5L16.7 10.8V14.2L25.8 10.3Z" fill="#0b4a6c"/><path d="M16.7 13.9V18.2L25.8 25V19.1Z" fill="#2f86b4"/></svg>
<div class="t" style="left:928.5px;top:159.5px;font-size:12px;line-height:16px;color:#1a1a1a;letter-spacing:-0.15px">ExboLink Properties</div>
<svg class="a" style="left:1282px;top:162px" width="10" height="10" viewBox="0 0 10 10"><path d="M0.5 0.5L9.5 9.5M9.5 0.5L0.5 9.5" stroke="#1a1a1a" stroke-width="1.1"/></svg>
<div class="a" style="left:907px;top:192px;width:116px;height:18px;background:#f2f2f2;border:1px solid #dcdcdc;border-bottom:none"></div>
<div class="a" style="left:1022px;top:192px;width:111px;height:18px;background:#f2f2f2;border:1px solid #dcdcdc;border-bottom:none"></div>
<div class="a" style="left:1132px;top:192px;width:160px;height:18px;background:#f2f2f2;border:1px solid #dcdcdc;border-bottom:none"></div>
<div class="a" style="left:1015px;top:210px;width:127px;height:19px;background:#f2f2f2;border:1px solid #dcdcdc"></div>
<div class="a" style="left:1141px;top:210px;width:151px;height:19px;background:#f2f2f2;border:1px solid #dcdcdc"></div>
<div class="a" style="left:905px;top:228px;width:389px;height:452px;background:#f9f9f9;border:1px solid #dcdcdc"></div>
<div class="a" style="left:905px;top:208px;width:111px;height:21px;background:#f9f9f9;border:1px solid #dcdcdc;border-bottom:none"></div>
<div class="t" style="left:907px;width:115px;text-align:center;top:193.8px;font-size:11px;line-height:16px;color:#000;letter-spacing:-0.4px">Security</div>
<div class="t" style="left:1022px;width:110px;text-align:center;top:193.8px;font-size:11px;line-height:16px;color:#000;letter-spacing:-0.4px">Details</div>
<div class="t" style="left:1132px;width:160px;text-align:center;top:193.8px;font-size:11px;line-height:16px;color:#000;letter-spacing:-0.4px">Previous Versions</div>
<div class="t" style="left:905px;width:110px;text-align:center;top:209.6px;font-size:11px;line-height:16px;color:#000;letter-spacing:-0.4px">General</div>
<div class="t" style="left:1015px;width:126px;text-align:center;top:211.7px;font-size:11px;line-height:16px;color:#000;letter-spacing:-0.4px">Compatibility</div>
<div class="t" style="left:1141px;width:151px;text-align:center;top:211.7px;font-size:11px;line-height:16px;color:#000;letter-spacing:-0.4px">Digital Signatures</div>
<svg class="a" style="left:920px;top:241px" width="32" height="32" viewBox="0 0 32 32"><rect x="0" y="0" width="32" height="31" fill="#17202a"/><rect x="0.5" y="0.5" width="31" height="30" fill="none" stroke="#0d1a26" stroke-width="1"/><rect x="7" y="30" width="18" height="2" fill="#0f1a24"/><path d="M6.6 4.5L16.2 10.3V17L6.6 10.6Z" fill="#c3171f"/><path d="M16.2 15.5L6.8 19.2V25.3L16.2 21.2Z" fill="#8c1b1d"/><path d="M25.8 5L16.7 10.8V14.2L25.8 10.3Z" fill="#0b4a6c"/><path d="M16.7 13.9V18.2L25.8 25V19.1Z" fill="#2f86b4"/></svg>
<div class="a" style="left:993px;top:248px;width:245px;height:23px;background:#fff;border:1px solid #e3e3e3;border-bottom:1px solid #8a8a8a;border-radius:2px"></div>
<div class="t" style="left:996.5px;top:250.5px;font-size:11px;line-height:16px;color:#000;letter-spacing:-0.35px">ExboLink</div>
<div class="a" style="left:920px;top:282px;width:317px;height:1px;background:#a8a8a8"></div>
<div class="t" style="left:920px;top:294.0px;font-size:11px;line-height:16px;color:#000;letter-spacing:-0.2px">Type of file:</div>
<div class="t" style="left:993px;top:294.0px;font-size:11px;line-height:16px;color:#000;letter-spacing:-0.2px">Application (.exe)</div>
<div class="t" style="left:920px;top:320.0px;font-size:11px;line-height:16px;color:#000;letter-spacing:-0.2px">Description:</div>
<div class="t" style="left:993px;top:320.0px;font-size:11px;line-height:16px;color:#000;letter-spacing:-0.2px">Launcher Link</div>
<div class="a" style="left:920px;top:347px;width:317px;height:1px;background:#a8a8a8"></div>
<div class="t" style="left:920px;top:359.0px;font-size:11px;line-height:16px;color:#000;letter-spacing:-0.2px">Location:</div>
<div class="t" style="left:993px;top:359.0px;font-size:11px;line-height:16px;color:#000;letter-spacing:-0.2px">D:\EXBO</div>
<div class="t" style="left:920px;top:385.0px;font-size:11px;line-height:16px;color:#000;letter-spacing:-0.2px">Size:</div>
<div class="t" style="left:993px;top:385.0px;font-size:11px;line-height:16px;color:#000;letter-spacing:-0.2px">386 KB (395 272 bytes)</div>
<div class="t" style="left:920px;top:410.6px;font-size:11px;line-height:16px;color:#000;letter-spacing:-0.2px">Size on disk:</div>
<div class="t" style="left:993px;top:410.6px;font-size:11px;line-height:16px;color:#000;letter-spacing:-0.2px">388 KB (397 312 bytes)</div>
<div class="a" style="left:920px;top:438px;width:317px;height:1px;background:#a8a8a8"></div>
<div class="t" style="left:920px;top:450.0px;font-size:11px;line-height:16px;color:#000;letter-spacing:-0.2px">Created:</div>
<div class="t" style="left:993px;top:450.0px;font-size:11px;line-height:16px;color:#000;">14 сентября 2024 г., 11:01:27</div>
<div class="t" style="left:920px;top:476.0px;font-size:11px;line-height:16px;color:#000;letter-spacing:-0.2px">Modified:</div>
<div class="t" style="left:993px;top:476.0px;font-size:11px;line-height:16px;color:#000;">14 сентября 2024 г., 11:01:27</div>
<div class="t" style="left:920px;top:501.7px;font-size:11px;line-height:16px;color:#000;letter-spacing:-0.2px">Accessed:</div>
<div class="t" style="left:993px;top:501.7px;font-size:11px;line-height:16px;color:#000;">22 сентября 2024 г., 12:33:05</div>
<div class="a" style="left:920px;top:529px;width:317px;height:1px;background:#a8a8a8"></div>
<div class="t" style="left:920px;top:541.0px;font-size:11px;line-height:16px;color:#000;letter-spacing:-0.2px">Attributes:</div>
<div class="a" style="left:993px;top:544px;width:12px;height:12px;background:#fff;border:1px solid #333;border-radius:3px"></div>
<div class="t" style="left:1009.5px;top:541.5px;font-size:11px;line-height:16px;color:#000;letter-spacing:-0.3px">Read-only</div>
<div class="a" style="left:1073px;top:544px;width:12px;height:12px;background:#fff;border:1px solid #333;border-radius:3px"></div>
<div class="t" style="left:1089.5px;top:541.5px;font-size:11px;line-height:16px;color:#000;letter-spacing:-0.2px">Hidden</div>
<div class="a" style="left:1165px;top:540px;width:73px;height:21px;background:#fdfdfd;border:1px solid #cdcdcd;border-radius:4px"></div>
<div class="t" style="left:1165px;width:73px;text-align:center;top:543px;font-size:11px;line-height:16px;color:#000;letter-spacing:-0.1px">Advanced...</div>
<div class="a" style="left:1060px;top:688px;width:73px;height:21px;background:#fdfdfd;border:1.5px solid #0067c0;border-radius:4px"></div>
<div class="t" style="left:1060px;width:73px;text-align:center;top:691px;font-size:11px;line-height:16px;color:#000;letter-spacing:-0.4px">OK</div>
<div class="a" style="left:1141px;top:688px;width:73px;height:21px;background:#fdfdfd;border:1px solid #c8c8c8;border-radius:4px"></div>
<div class="t" style="left:1141px;width:73px;text-align:center;top:691px;font-size:11px;line-height:16px;color:#000;letter-spacing:-0.4px">Cancel</div>
<div class="a" style="left:1222px;top:688px;width:72px;height:21px;background:#f6f6f6;border:1px solid #e3e3e3;border-radius:4px"></div>
<div class="t" style="left:1222px;width:72px;text-align:center;top:691px;font-size:11px;line-height:16px;color:#9d9d9d;letter-spacing:-0.4px">Apply</div>
<svg class="a" style="left:0;top:0" width="1362" height="815" viewBox="0 0 1362 815"><path d="M1062 367.6C1120 366.6, 1150 367.6, 1165 374C1178 381, 1182 393, 1182 419" fill="none" stroke="#6a6a6a" stroke-opacity="0.5" stroke-width="4.4"/><path d="M1062 366.5C1120 365.5, 1150 366.5, 1165 373C1178 380, 1181 392, 1181 418" fill="none" stroke="#41bdf3" stroke-width="4.4"/><path d="M1043 366.5L1067 358.6L1063.5 366.5L1067 374.4Z" fill="#41bdf3"/></svg>
</body></html>
